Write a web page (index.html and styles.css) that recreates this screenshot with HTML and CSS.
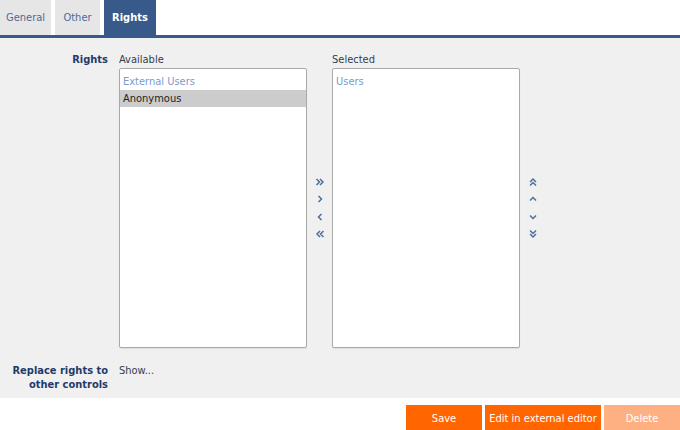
FILE: index.html
```html
<!DOCTYPE html>
<html>
<head>
<meta charset="utf-8">
<link rel="stylesheet" href="styles.css">
</head>
<body>
<div class="tabs">
  <div class="tab">General</div>
  <div class="tab">Other</div>
  <div class="tab active">Rights</div>
</div>
<div class="tabline"></div>
<div class="content">
  <div class="row row-rights">
    <div class="label">Rights</div>
    <div class="field picker">
      <div class="col">
        <div class="caption">Available</div>
        <div class="listbox">
          <div class="group">External Users</div>
          <div class="item selected">Anonymous</div>
        </div>
      </div>
      <div class="arrows">
        <svg class="ic" viewBox="0 0 10 10"><path d="M1.5 2 L4.5 5 L1.5 8 M5 2 L8 5 L5 8"/></svg>
        <svg class="ic" viewBox="0 0 10 10"><path d="M3.5 2 L6.5 5 L3.5 8"/></svg>
        <svg class="ic" viewBox="0 0 10 10"><path d="M6.5 2 L3.5 5 L6.5 8"/></svg>
        <svg class="ic" viewBox="0 0 10 10"><path d="M5 2 L2 5 L5 8 M8.5 2 L5.5 5 L8.5 8"/></svg>
      </div>
      <div class="col">
        <div class="caption">Selected</div>
        <div class="listbox">
          <div class="group">Users</div>
        </div>
      </div>
      <div class="arrows">
        <svg class="ic" viewBox="0 0 10 10"><path d="M2 5 L5 2 L8 5 M2 8.5 L5 5.5 L8 8.5"/></svg>
        <svg class="ic" viewBox="0 0 10 10"><path d="M2 6.5 L5 3.5 L8 6.5"/></svg>
        <svg class="ic" viewBox="0 0 10 10"><path d="M2 3.5 L5 6.5 L8 3.5"/></svg>
        <svg class="ic" viewBox="0 0 10 10"><path d="M2 1.5 L5 4.5 L8 1.5 M2 5 L5 8 L8 5"/></svg>
      </div>
    </div>
  </div>
  <div class="row row-replace">
    <div class="label">Replace rights to<br>other controls</div>
    <div class="field"><span class="link">Show...</span></div>
  </div>
</div>
<div class="footer">
  <button class="btn">Save</button>
  <button class="btn">Edit in external editor</button>
  <button class="btn disabled">Delete</button>
</div>
</body>
</html>
```
FILE: styles.css
```css
html, body {
  margin: 0;
  padding: 0;
  background: #ffffff;
}
body {
  width: 680px;
  height: 430px;
  overflow: hidden;
  font-family: "DejaVu Sans Condensed", "DejaVu Sans", sans-serif;
  font-size: 11px;
  color: #333d4a;
}
.tabs {
  display: flex;
  gap: 4px;
  height: 35px;
}
.tab {
  background: #e6e6e6;
  color: #4e6a96;
  display: flex;
  align-items: center;
  justify-content: center;
  padding: 0 6px;
}
.tab:nth-child(1) { width: 39px; }
.tab:nth-child(2) { width: 33px; }
.tab.active {
  background: #385a8b;
  color: #ffffff;
  font-weight: bold;
  width: 40px;
}
.tabline {
  height: 3px;
  background: #385a8b;
}
.content {
  background: #f0f0f0;
  height: 360px;
  box-sizing: border-box;
  padding-top: 15px;
}
.row {
  display: grid;
  grid-template-columns: 108px 1fr;
  column-gap: 11px;
}
.label {
  text-align: right;
  font-weight: bold;
  color: #1f3b6b;
  line-height: 14px;
}
.picker {
  display: flex;
  align-items: stretch;
}
.col {
  display: flex;
  flex-direction: column;
}
.caption {
  line-height: 14px;
  height: 14px;
  margin-bottom: 1px;
  color: #34404f;
}
.listbox {
  width: 186px;
  height: 274px;
  background: #ffffff;
  border: 1px solid #a9a9a9;
  border-radius: 2px;
  box-shadow: 0 1px 1px rgba(0,0,0,0.08);
  padding-top: 4px;
}
.group {
  color: #7b9bcb;
  padding: 0 3px;
  line-height: 17px;
}
.item {
  padding: 0 3px;
  line-height: 17px;
  color: #222;
}
.item.selected {
  background: #cccccc;
}
.arrows {
  width: 25px;
  display: flex;
  flex-direction: column;
  align-items: center;
  justify-content: center;
  gap: 7.5px;
  padding-top: 15px;
}
.ic {
  width: 10px;
  height: 10px;
  fill: none;
  stroke: #4e6e9e;
  stroke-width: 1.5;
}
.row-replace {
  margin-top: 16px;
}
.row-replace .field {
  line-height: 14px;
}
.link {
  color: #34404f;
}
.footer {
  height: 32px;
  display: flex;
  justify-content: flex-end;
  gap: 3px;
  padding-top: 7px;
  box-sizing: border-box;
}
.btn {
  border: none;
  background: #ff6600;
  color: #ffffff;
  font-family: inherit;
  font-size: 11px;
  height: 26px;
  padding: 0;
  margin: 0;
}
.btn:nth-child(1) { width: 76px; }
.btn:nth-child(2) { width: 116px; }
.btn.disabled {
  width: 76px;
  background: #ffb083;
}
```
